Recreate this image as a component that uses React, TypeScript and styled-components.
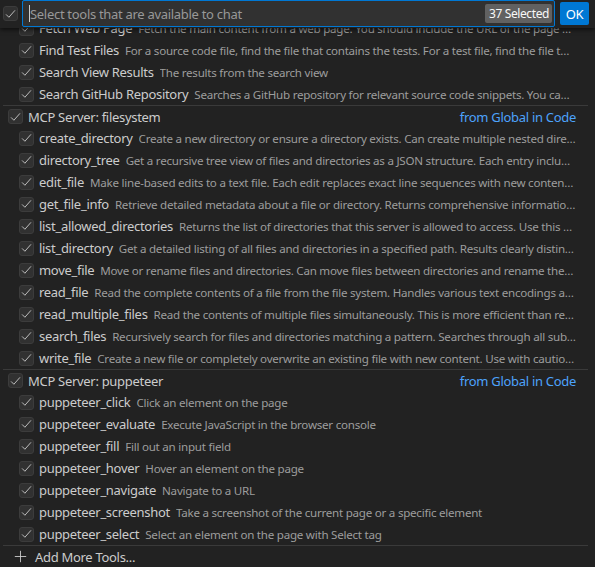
import React, { useLayoutEffect, useRef } from "react";
import styled, { createGlobalStyle } from "styled-components";

const GlobalStyle = createGlobalStyle`
  html, body { margin: 0; padding: 0; background: #222222; }
  body {
    font-family: "Noto Sans", "Open Sans", sans-serif;
    font-size: 13px;
    letter-spacing: -0.3px;
    color: #cccccc;
  }
  * { box-sizing: border-box; }
`;

const Widget = styled.div`
  width: 595px;
  height: 567px;
  display: flex;
  flex-direction: column;
  background: #222222;
  overflow: hidden;
`;

const Header = styled.div`
  position: relative;
  z-index: 1;
  height: 28px;
  flex: none;
  display: flex;
  align-items: flex-start;
  padding: 0 6px 0 3px;
  background: #222222;
  box-shadow: 0 2px 4px rgba(0, 0, 0, 0.55);
`;

const Box = styled.span`
  flex: none;
  width: 15px;
  height: 15px;
  border: 1px solid #3c3c3c;
  border-radius: 3px;
  background: #313131;
  display: inline-flex;
  align-items: center;
  justify-content: center;
  color: #cccccc;
`;

const HeaderBox = styled(Box)`
  margin: 6px 4px 0 0;
`;

const InputBox = styled.div`
  flex: 1;
  height: 27px;
  display: flex;
  align-items: center;
  border: 1px solid #0078d4;
  border-radius: 2px;
  background: #313131;
  padding: 0 2px 0 6px;
`;

const Caret = styled.span`
  width: 1px;
  height: 17px;
  background: #cccccc;
  flex: none;
`;

const Placeholder = styled.span`
  flex: 1;
  color: #989898;
  font-size: 13px;
  white-space: nowrap;
`;

const Badge = styled.span`
  flex: none;
  height: 19px;
  display: inline-flex;
  align-items: center;
  padding: 0 3px 0 4px;
  border-radius: 2px;
  background: #616161;
  color: #f8f8f8;
  font-size: 12px;
  letter-spacing: -0.4px;
`;

const OkButton = styled.button`
  flex: none;
  width: 29px;
  margin: 2px 0 0 5px;
  height: 23px;
  padding: 0;
  border: none;
  border-radius: 2px;
  background: #0078d4;
  color: #ffffff;
  font-family: inherit;
  font-size: 13px;
  letter-spacing: inherit;
`;

const List = styled.div`
  flex: 1;
  overflow: hidden;
`;

const Row = styled.div`
  height: 22px;
  display: flex;
  align-items: center;
  gap: 5px;
  padding: 0 19px 0 19px;
  white-space: nowrap;
  overflow: hidden;
`;

const GroupRow = styled(Row)`
  margin: 0 7px 0 3px;
  padding-left: 5px;
  padding-right: 12px;
  border-top: 1px solid #3a3a3a;
`;

const Label = styled.span`
  flex: none;
  color: #cccccc;
`;

const Desc = styled.span`
  flex: 1;
  min-width: 0;
  margin-left: 1px;
  color: #9d9d9d;
  font-size: 11.6px;
  letter-spacing: -0.25px;
  overflow: hidden;
  text-overflow: ellipsis;
`;

const Source = styled.span`
  margin-left: auto;
  color: #4da3fc;
`;

const Footer = styled.div`
  flex: none;
  height: 22px;
  margin: 0 7px 0 3px;
  border-top: 1px solid #3a3a3a;
  display: flex;
  align-items: center;
  gap: 8px;
  padding-left: 11px;
  color: #cccccc;
`;

const Check = () => (
  <svg width="14" height="14" viewBox="0 0 16 16" fill="none">
    <path d="M2.5 8.5 L6 12 L13.5 3.5" stroke="currentColor" strokeWidth="1.1" />
  </svg>
);

const Plus = () => (
  <svg width="13" height="13" viewBox="0 0 16 16" fill="none">
    <path d="M8 1 V15 M1 8 H15" stroke="#cccccc" strokeWidth="1.1" />
  </svg>
);

type Tool = [string, string];

const builtIn: Tool[] = [
  ["Fetch Web Page", "Fetch the main content from a web page. You should include the URL of the page you want to fetch."],
  ["Find Test Files", "For a source code file, find the file that contains the tests. For a test file, find the file that contains the code under test."],
  ["Search View Results", "The results from the search view"],
  ["Search GitHub Repository", "Searches a GitHub repository for relevant source code snippets. You can specify a repository using owner/repo."],
];

const filesystem: Tool[] = [
  ["create_directory", "Create a new directory or ensure a directory exists. Can create multiple nested directories in one operation."],
  ["directory_tree", "Get a recursive tree view of files and directories as a JSON structure. Each entry includes name, type and children."],
  ["edit_file", "Make line-based edits to a text file. Each edit replaces exact line sequences with new content. Returns a diff."],
  ["get_file_info", "Retrieve detailed metadata about a file or directory. Returns comprehensive information including size."],
  ["list_allowed_directories", "Returns the list of directories that this server is allowed to access. Use this to understand which directories are available."],
  ["list_directory", "Get a detailed listing of all files and directories in a specified path. Results clearly distinguish between files and directories."],
  ["move_file", "Move or rename files and directories. Can move files between directories and rename them in a single operation."],
  ["read_file", "Read the complete contents of a file from the file system. Handles various text encodings and provides detailed error messages."],
  ["read_multiple_files", "Read the contents of multiple files simultaneously. This is more efficient than reading files one by one."],
  ["search_files", "Recursively search for files and directories matching a pattern. Searches through all subdirectories from the starting path."],
  ["write_file", "Create a new file or completely overwrite an existing file with new content. Use with caution as it will overwrite existing files."],
];

const puppeteer: Tool[] = [
  ["puppeteer_click", "Click an element on the page"],
  ["puppeteer_evaluate", "Execute JavaScript in the browser console"],
  ["puppeteer_fill", "Fill out an input field"],
  ["puppeteer_hover", "Hover an element on the page"],
  ["puppeteer_navigate", "Navigate to a URL"],
  ["puppeteer_screenshot", "Take a screenshot of the current page or a specific element"],
  ["puppeteer_select", "Select an element on the page with Select tag"],
];

const ToolRow = ({ tool }: { tool: Tool }) => (
  <Row>
    <Box><Check /></Box>
    <Label>{tool[0]}</Label>
    <Desc>{tool[1]}</Desc>
  </Row>
);

const Group = ({ name, tools }: { name: string; tools: Tool[] }) => (
  <>
    <GroupRow>
      <Box><Check /></Box>
      <Label>{name}</Label>
      <Source>from Global in Code</Source>
    </GroupRow>
    {tools.map((t) => (
      <ToolRow key={t[0]} tool={t} />
    ))}
  </>
);

export default function App() {
  const listRef = useRef<HTMLDivElement>(null);
  useLayoutEffect(() => {
    if (listRef.current) listRef.current.scrollTop = listRef.current.scrollHeight;
  }, []);
  return (
    <>
      <GlobalStyle />
      <Widget>
        <Header>
          <HeaderBox><Check /></HeaderBox>
          <InputBox>
            <Caret />
            <Placeholder>Select tools that are available to chat</Placeholder>
            <Badge>37 Selected</Badge>
          </InputBox>
          <OkButton>OK</OkButton>
        </Header>
        <List ref={listRef}>
          {builtIn.map((t) => (
            <ToolRow key={t[0]} tool={t} />
          ))}
          <Group name="MCP Server: filesystem" tools={filesystem} />
          <Group name="MCP Server: puppeteer" tools={puppeteer} />
        </List>
        <Footer>
          <Plus />
          <span>Add More Tools...</span>
        </Footer>
      </Widget>
    </>
  );
}
